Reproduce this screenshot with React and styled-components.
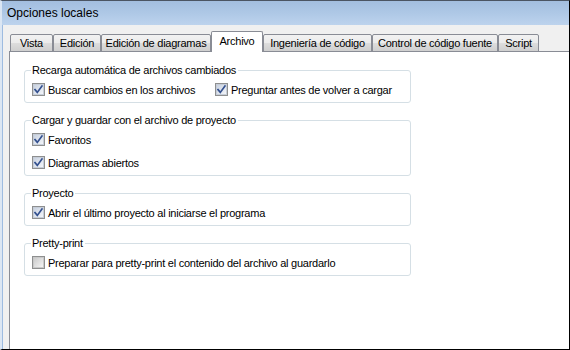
import React from "react";
import styled, { createGlobalStyle } from "styled-components";

const Global = createGlobalStyle`
  html, body { margin: 0; padding: 0; background: #fff; overflow: hidden; }
  * { box-sizing: border-box; }
`;

const Window = styled.div`
  width: 570px;
  height: 350px;
  display: flex;
  flex-direction: column;
  border-top: 1px solid #4b5563;
  border-right: 1px solid #000;
  border-bottom: 1px solid #000;
  border-left: 2px solid #dbe6f3;
  font-family: "Liberation Sans", Arial, sans-serif;
  font-size: 11px;
  letter-spacing: -0.25px;
  color: #000;
  overflow: hidden;
`;

const TitleBar = styled.div`
  height: 24px;
  flex: none;
  display: flex;
  align-items: center;
  padding-left: 5px;
  font-size: 12px;
  letter-spacing: 0;
  background: linear-gradient(to bottom, #a3bedf 0%, #aec8e6 50%, #bdd3ed 100%);
`;

const Body = styled.div`
  flex: 1;
  display: flex;
  flex-direction: column;
  background: #f0f0f0;
  border-left: 1px solid #9dbbe0;
  padding: 7px 0 0 6px;
  min-height: 0;
`;

const TabRow = styled.div`
  display: flex;
  align-items: flex-end;
  height: 20px;
  padding-left: 1px;
  position: relative;
  z-index: 1;
  margin-bottom: -1px;
`;

const Tab = styled.div`
  width: ${(p) => p.$w}px;
  height: ${(p) => (p.$active ? 21 : 18)}px;
  display: flex;
  align-items: center;
  justify-content: center;
  padding-bottom: ${(p) => (p.$active ? 2 : 0)}px;
  border: 1px solid #898c95;
  border-bottom: ${(p) => (p.$active ? "none" : "1px solid #898c95")};
  border-radius: 2px 2px 0 0;
  background: ${(p) =>
    p.$active
      ? "#fff"
      : "linear-gradient(to bottom, #f2f2f2 0%, #ebebeb 50%, #dddddd 51%, #cfcfcf 100%)"};
  white-space: nowrap;
`;

const Panel = styled.div`
  flex: 1;
  background: #fff;
  border-top: 1px solid #898c95;
  border-left: 1px solid #898c95;
  padding: 11px 0 0 14px;
  display: flex;
  flex-direction: column;
  gap: 10px;
`;

const Group = styled.fieldset`
  width: 387px;
  margin: 0;
  padding: 0 4px 4px 7px;
  border: 1px solid #d5dfe5;
  border-radius: 3px;
  display: flex;
  flex-direction: column;
  gap: 6px;
  min-width: 0;
`;

const Legend = styled.legend`
  padding: 0 2px 0 1px;
  margin-left: -1px;
  line-height: 14px;
  font-size: 11px;
`;

const Row = styled.div`
  display: flex;
  align-items: center;
  margin-top: ${(p) => (p.$first ? 4 : 0)}px;
`;

const Item = styled.label`
  display: flex;
  align-items: center;
  height: 17px;
  gap: 2px;
  width: ${(p) => (p.$w ? `${p.$w}px` : "auto")};
  flex: none;
  white-space: nowrap;
`;

const Box = styled.span`
  width: 13px;
  height: 13px;
  flex: none;
  border: 1px solid #8e8f8f;
  background: #f4f4f4;
  display: flex;
  align-items: center;
  justify-content: center;
  margin-right: 1px;
  & > span {
    width: 11px;
    height: 11px;
    border: 1px solid ${(p) => (p.$checked ? "#c6cdd8" : "#c9c9c9")};
    background: ${(p) =>
      p.$checked
        ? "linear-gradient(135deg, #c9d2e0 0%, #e2e7ef 60%, #f3f5f9 100%)"
        : "linear-gradient(135deg, #cbcbcb 0%, #e3e3e3 60%, #f4f4f4 100%)"};
    display: flex;
    align-items: center;
    justify-content: center;
  }
`;

function Check({ checked, label, w }) {
  return (
    <Item $w={w}>
      <Box $checked={checked}>
        <span>
          {checked && (
            <svg width="9" height="9" viewBox="0 0 9 9">
              <path
                d="M1 4.6 L3.3 7.4 L8 1"
                fill="none"
                stroke="#33508f"
                strokeWidth="1.7"
                strokeLinecap="square"
              />
            </svg>
          )}
        </span>
      </Box>
      {label}
    </Item>
  );
}

const tabs = [
  { t: "Vista", w: 43 },
  { t: "Edición", w: 48 },
  { t: "Edición de diagramas", w: 110 },
  { t: "Archivo", w: 52, active: true },
  { t: "Ingeniería de código", w: 109 },
  { t: "Control de código fuente", w: 126 },
  { t: "Script", w: 41 },
];

export default function App() {
  return (
    <>
      <Global />
      <Window>
        <TitleBar>Opciones locales</TitleBar>
        <Body>
          <TabRow>
            {tabs.map((x) => (
              <Tab key={x.t} $w={x.w} $active={x.active}>
                {x.t}
              </Tab>
            ))}
          </TabRow>
          <Panel>
            <Group>
              <Legend>Recarga automática de archivos cambiados</Legend>
              <Row $first>
                <Check checked w={183} label="Buscar cambios en los archivos" />
                <Check checked label="Preguntar antes de volver a cargar" />
              </Row>
            </Group>
            <Group>
              <Legend>Cargar y guardar con el archivo de proyecto</Legend>
              <Row $first>
                <Check checked label="Favoritos" />
              </Row>
              <Row>
                <Check checked label="Diagramas abiertos" />
              </Row>
            </Group>
            <Group>
              <Legend>Proyecto</Legend>
              <Row $first>
                <Check checked label="Abrir el último proyecto al iniciarse el programa" />
              </Row>
            </Group>
            <Group>
              <Legend>Pretty-print</Legend>
              <Row $first>
                <Check label="Preparar para pretty-print el contenido del archivo al guardarlo" />
              </Row>
            </Group>
          </Panel>
        </Body>
      </Window>
    </>
  );
}
